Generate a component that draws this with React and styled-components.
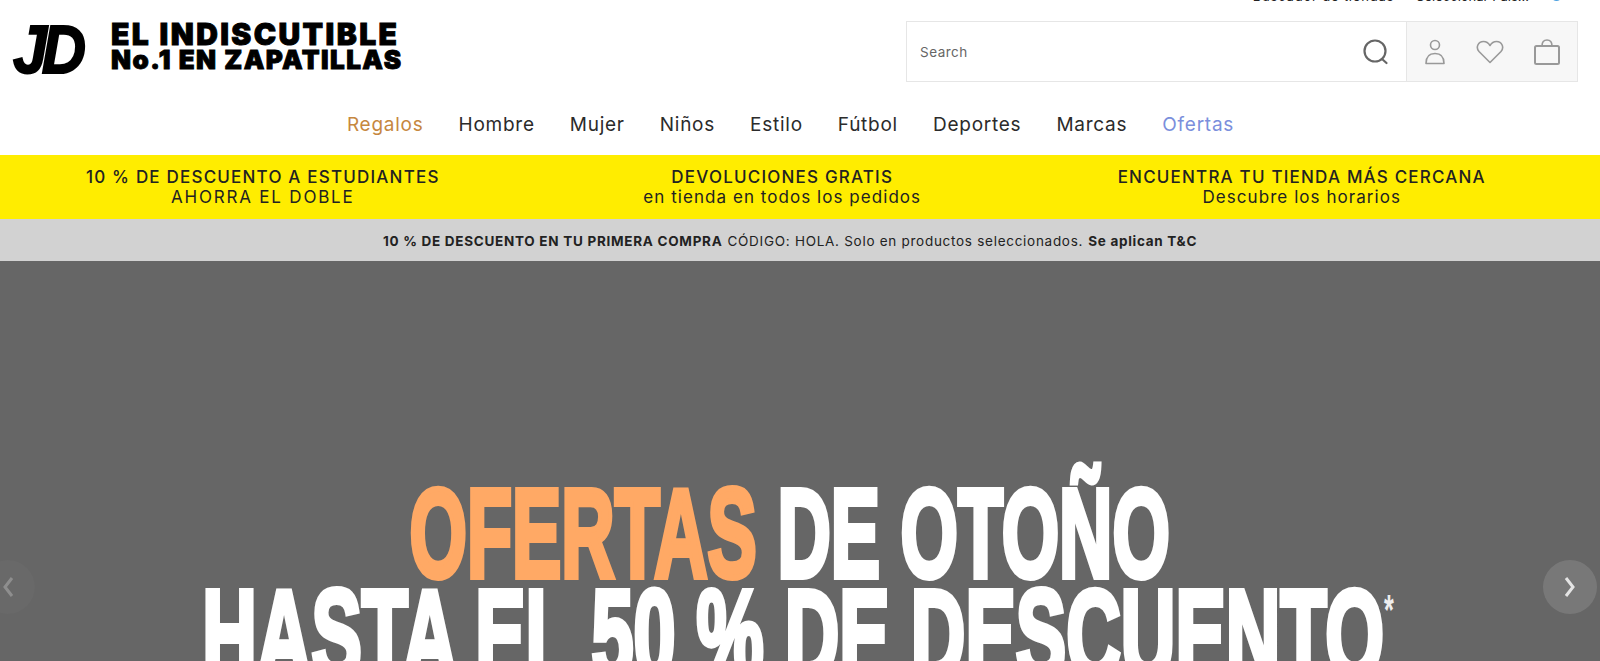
import React from 'react';
import styled, { createGlobalStyle } from 'styled-components';

const GlobalStyle = createGlobalStyle`
  html, body { margin: 0; padding: 0; background: #fff; }
  body { font-family: Inter, "Liberation Sans", sans-serif; color: #222; }
`;

const Page = styled.div`
  width: 1600px;
  height: 661px;
  overflow: hidden;
  display: flex;
  flex-direction: column;
`;

const TopLinks = styled.div`
  height: 4px;
  overflow: hidden;
  display: flex;
  justify-content: flex-end;
  align-items: flex-end;
  gap: 22px;
  padding-right: 38px;
  font-size: 13px;
  line-height: 16px;
`;

const TopLink = styled.span`
  letter-spacing: ${(p) => p.$spacing || 0}px;
`;

const Dot = styled.span`
  display: inline-block;
  width: 11px;
  height: 11px;
  margin-left: 22px;
  border-radius: 50%;
  background: #4a9fe0;
`;

const Masthead = styled.div`
  height: 90px;
  display: flex;
  justify-content: space-between;
  padding: 17px 22px 0 13px;
  box-sizing: border-box;
`;

const Brand = styled.div`
  display: flex;
  align-items: flex-start;
  gap: 24px;
  color: #000;
`;

const BrandMark = styled.div`
  width: 74px;
  margin-top: -3px;
  font-family: "Liberation Sans", sans-serif;
  font-style: italic;
  font-weight: 700;
  font-size: 68px;
  line-height: 62px;
  letter-spacing: -6px;
  -webkit-text-stroke: 2px #000;
  transform: scaleX(0.9);
  transform-origin: left center;
`;

const Tagline = styled.div`
  display: flex;
  flex-direction: column;
  margin-top: -1px;
  font-weight: 900;
  white-space: nowrap;
  -webkit-text-stroke: 0.9px #000;
`;

const TaglineTop = styled.span`
  font-size: 30px;
  line-height: 28px;
  letter-spacing: 2.4px;
`;

const TaglineBottom = styled.span`
  font-size: 26px;
  line-height: 24px;
  letter-spacing: 1.45px;
`;

const SearchBar = styled.div`
  width: 672px;
  height: 61px;
  display: flex;
  border: 1px solid #e6e6e6;
  box-sizing: border-box;
`;

const SearchField = styled.div`
  flex: 1;
  display: flex;
  align-items: center;
  justify-content: space-between;
  padding: 0 17px 0 13px;
  font-size: 13.5px;
  letter-spacing: 0.5px;
  color: #666;
`;

const Actions = styled.div`
  width: 171px;
  display: flex;
  align-items: center;
  gap: 30px;
  padding-left: 17px;
  box-sizing: border-box;
  background: #f7f7f7;
  border-left: 1px solid #e6e6e6;
`;

const Nav = styled.nav`
  height: 61px;
  display: flex;
  justify-content: center;
  align-items: flex-start;
  gap: 35px;
  padding: 19px 19px 0 0;
  box-sizing: border-box;
  font-size: 19px;
  line-height: 24px;
  letter-spacing: 0.75px;
`;

const NavLink = styled.a`
  color: ${(p) => p.$color || '#2b2b2b'};
`;

const Promos = styled.div`
  height: 64px;
  display: grid;
  grid-template-columns: repeat(3, 519.5px);
  padding: 12px 0 0 3px;
  box-sizing: border-box;
  background: #ffed00;
  text-align: center;
  color: #222;
`;

const PromoTitle = styled.div`
  font-size: 17px;
  line-height: 20px;
  font-weight: 500;
  letter-spacing: 1.2px;
`;

const PromoText = styled.div`
  font-size: 17px;
  line-height: 20px;
  letter-spacing: ${(p) => (p.$caps ? 1.8 : 1.05)}px;
`;

const Notice = styled.div`
  height: 42px;
  display: flex;
  align-items: center;
  justify-content: center;
  gap: 5px;
  padding: 1px 20px 0 0;
  box-sizing: border-box;
  background: #d2d2d2;
  font-size: 13.5px;
  letter-spacing: 0.72px;
  color: #222;
`;

const Hero = styled.section`
  position: relative;
  flex: 1;
  overflow: hidden;
  background: #666;
  padding: 222px 20px 0 0;
`;

const HeroLine = styled.div`
  display: flex;
  justify-content: center;
  font-family: "Liberation Sans", sans-serif;
  font-weight: 700;
  font-size: 126px;
  line-height: 101px;
  white-space: nowrap;
  color: #fff;
`;

const HeroText = styled.span`
  flex: none;
  transform: translateX(${(p) => p.$shift || 0}px) scaleX(${(p) => p.$scale});
  -webkit-text-stroke: 6px currentColor;
`;

const Accent = styled.span`
  color: #ffa965;
`;

const Sup = styled.sup`
  font-size: 42px;
  line-height: 0;
  vertical-align: 54px;
  -webkit-text-stroke: 0;
  color: #eee;
`;

const Arrow = styled.div`
  position: absolute;
  top: 299px;
  ${(p) => (p.$side === 'left' ? 'left: -19px;' : 'right: 3px;')}
  width: 54px;
  height: 54px;
  display: flex;
  align-items: center;
  justify-content: center;
  border-radius: 50%;
  background: rgba(255, 255, 255, ${(p) => (p.$side === 'left' ? 0.02 : 0.12)});
  color: rgba(255, 255, 255, ${(p) => (p.$side === 'left' ? 0.25 : 0.8)});
`;

const SearchIcon = () => (
  <svg width="26" height="26" viewBox="0 0 26 26" fill="none" stroke="#666" strokeWidth="2.2">
    <circle cx="12" cy="12" r="10.5" />
    <path d="M19 20l4.5 4" strokeLinecap="round" />
  </svg>
);

const UserIcon = () => (
  <svg width="22" height="26" viewBox="0 0 22 26" fill="none" stroke="#999" strokeWidth="1.6">
    <circle cx="11" cy="6" r="4.5" />
    <path d="M2 24.500c0-6 3-10 9-10s9 4 9 10z" strokeLinejoin="round" />
  </svg>
);

const HeartIcon = () => (
  <svg width="28" height="24" viewBox="0 0 28 24" fill="none" stroke="#999" strokeWidth="1.6">
    <path d="M14 22.500L3 11.500C-.5 7.500 2 1.500 7.500 1.500c3 0 5 1.500 6.500 4 1.500-2.500 3.500-4 6.500-4 5.500 0 8 6 4.500 10z" strokeLinejoin="round" />
  </svg>
);

const BagIcon = () => (
  <svg width="26" height="26" viewBox="0 0 26 26" fill="none" stroke="#999" strokeWidth="2">
    <rect x="1" y="7" width="24" height="18" rx="1.5" />
    <path d="M8 7c0-4 2-6 5-6s5 2 5 6" strokeWidth="1.6" />
  </svg>
);

const Chevron = ({ flip }) => (
  <svg width="12" height="20" viewBox="0 0 12 20" fill="none" stroke="currentColor" strokeWidth="3" style={flip ? { transform: 'scaleX(-1)' } : undefined}>
    <path d="M2 1l7 9-7 9" />
  </svg>
);

const navItems = [
  { label: 'Regalos', color: '#c6873f' },
  { label: 'Hombre' },
  { label: 'Mujer' },
  { label: 'Niños' },
  { label: 'Estilo' },
  { label: 'Fútbol' },
  { label: 'Deportes' },
  { label: 'Marcas' },
  { label: 'Ofertas', color: '#7b8fdc' },
];

const promos = [
  { title: '10 % DE DESCUENTO A ESTUDIANTES', text: 'AHORRA EL DOBLE', caps: true },
  { title: 'DEVOLUCIONES GRATIS', text: 'en tienda en todos los pedidos' },
  { title: 'ENCUENTRA TU TIENDA MÁS CERCANA', text: 'Descubre los horarios' },
];

const App = () => (
  <React.Fragment>
    <GlobalStyle />
    <Page>
      <TopLinks>
        <TopLink $spacing={0.8}>Buscador de tiendas</TopLink>
        <TopLink>Seleccionar País...<Dot /></TopLink>
      </TopLinks>
      <Masthead>
        <Brand>
          <BrandMark>JD</BrandMark>
          <Tagline>
            <TaglineTop>EL INDISCUTIBLE</TaglineTop>
            <TaglineBottom>No.1 EN ZAPATILLAS</TaglineBottom>
          </Tagline>
        </Brand>
        <SearchBar>
          <SearchField>
            <span>Search</span>
            <SearchIcon />
          </SearchField>
          <Actions>
            <UserIcon />
            <HeartIcon />
            <BagIcon />
          </Actions>
        </SearchBar>
      </Masthead>
      <Nav>
        {navItems.map((item) => (
          <NavLink key={item.label} $color={item.color}>{item.label}</NavLink>
        ))}
      </Nav>
      <Promos>
        {promos.map((promo) => (
          <div key={promo.title}>
            <PromoTitle>{promo.title}</PromoTitle>
            <PromoText $caps={promo.caps}>{promo.text}</PromoText>
          </div>
        ))}
      </Promos>
      <Notice>
        <b>10 % DE DESCUENTO EN TU PRIMERA COMPRA</b>
        <span>CÓDIGO: HOLA. Solo en productos seleccionados.</span>
        <b>Se aplican T&amp;C</b>
      </Notice>
      <Hero>
        <HeroLine><HeroText $scale={0.586}><Accent>OFERTAS</Accent> DE OTOÑO</HeroText></HeroLine>
        <HeroLine><HeroText $scale={0.6} $shift={8}>HASTA EL 50 % DE DESCUENTO<Sup>*</Sup></HeroText></HeroLine>
        <Arrow $side="left"><Chevron flip /></Arrow>
        <Arrow $side="right"><Chevron /></Arrow>
      </Hero>
    </Page>
  </React.Fragment>
);

export default App;
